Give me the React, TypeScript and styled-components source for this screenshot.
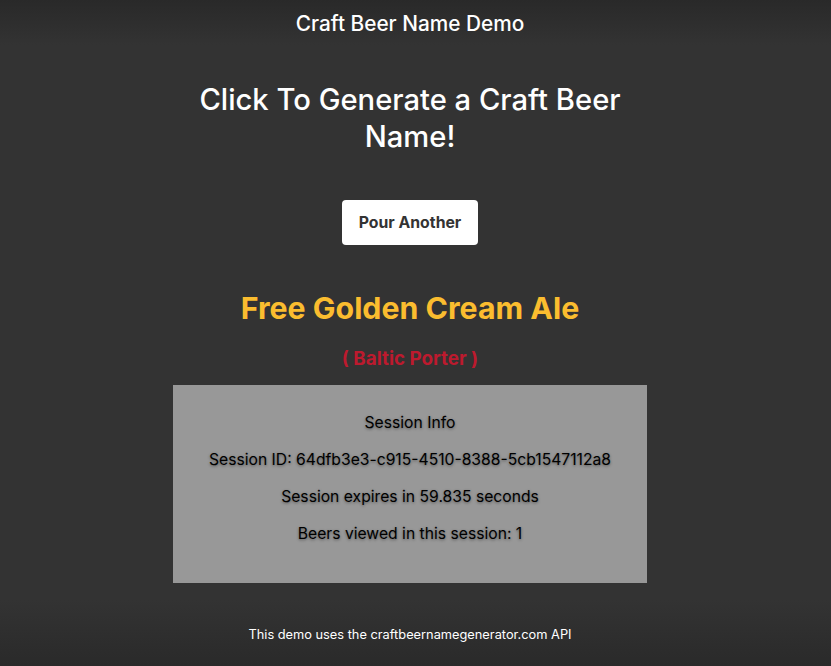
import React from "react";
import styled, { createGlobalStyle } from "styled-components";

const Global = createGlobalStyle`
  html, body {
    margin: 0;
    padding: 0;
  }
  body {
    font-family: Inter, "Noto Sans", sans-serif;
    background: #333333;
  }
`;

const Page = styled.div`
  min-height: 666px;
  box-sizing: border-box;
  padding-right: 11px;
  display: flex;
  flex-direction: column;
  align-items: center;
  color: #ffffff;
  background: linear-gradient(
    to bottom,
    #292929 0px,
    #333333 45px,
    #333333 600px,
    #2a2a2a 666px
  );
`;

const Header = styled.div`
  margin-top: 12px;
  font-size: 20.8px;
  line-height: 24px;
  font-weight: 500;
`;

const Main = styled.main`
  width: 474px;
  display: flex;
  flex-direction: column;
  align-items: center;
  text-align: center;
`;

const Title = styled.h1`
  margin: 45px 0 0;
  font-size: 29.2px;
  line-height: 37px;
  font-weight: 500;
  width: 450px;
`;

const PourButton = styled.button`
  margin-top: 45px;
  width: 136px;
  height: 45px;
  border: none;
  border-radius: 4px;
  background: #ffffff;
  color: #333333;
  font-family: Inter, "Noto Sans", sans-serif;
  font-size: 15.8px;
  font-weight: 700;
  cursor: pointer;
`;

const BeerName = styled.h2`
  margin: 46px 0 0;
  font-size: 30.3px;
  line-height: 34px;
  font-weight: 700;
  color: #fbbd2f;
`;

const BeerStyle = styled.h3`
  margin: 23px 0 0;
  font-size: 18.8px;
  line-height: 22px;
  font-weight: 700;
  color: #bd1a2e;
`;

const SessionBox = styled.section`
  margin-top: 15px;
  width: 474px;
  box-sizing: border-box;
  padding: 19px 0 31px;
  background: #989898;
  color: #000000;
  display: flex;
  flex-direction: column;
  align-items: center;
`;

const SessionLine = styled.p`
  margin: 0;
  font-size: 15.7px;
  line-height: 37px;
  text-shadow: 0 1px 3px rgba(0, 0, 0, 0.45);
`;

const Footer = styled.footer`
  margin-top: 44px;
  font-size: 12.8px;
  line-height: 16px;
  color: #ffffff;
`;

export default function App() {
  return (
    <>
      <Global />
      <Page>
        <Header>Craft Beer Name Demo</Header>
        <Main>
          <Title>Click To Generate a Craft Beer Name!</Title>
          <PourButton>Pour Another</PourButton>
          <BeerName>Free Golden Cream Ale</BeerName>
          <BeerStyle>( Baltic Porter )</BeerStyle>
          <SessionBox>
            <SessionLine>Session Info</SessionLine>
            <SessionLine>Session ID: 64dfb3e3-c915-4510-8388-5cb1547112a8</SessionLine>
            <SessionLine>Session expires in 59.835 seconds</SessionLine>
            <SessionLine>Beers viewed in this session: 1</SessionLine>
          </SessionBox>
        </Main>
        <Footer>This demo uses the craftbeernamegenerator.com API</Footer>
      </Page>
    </>
  );
}
